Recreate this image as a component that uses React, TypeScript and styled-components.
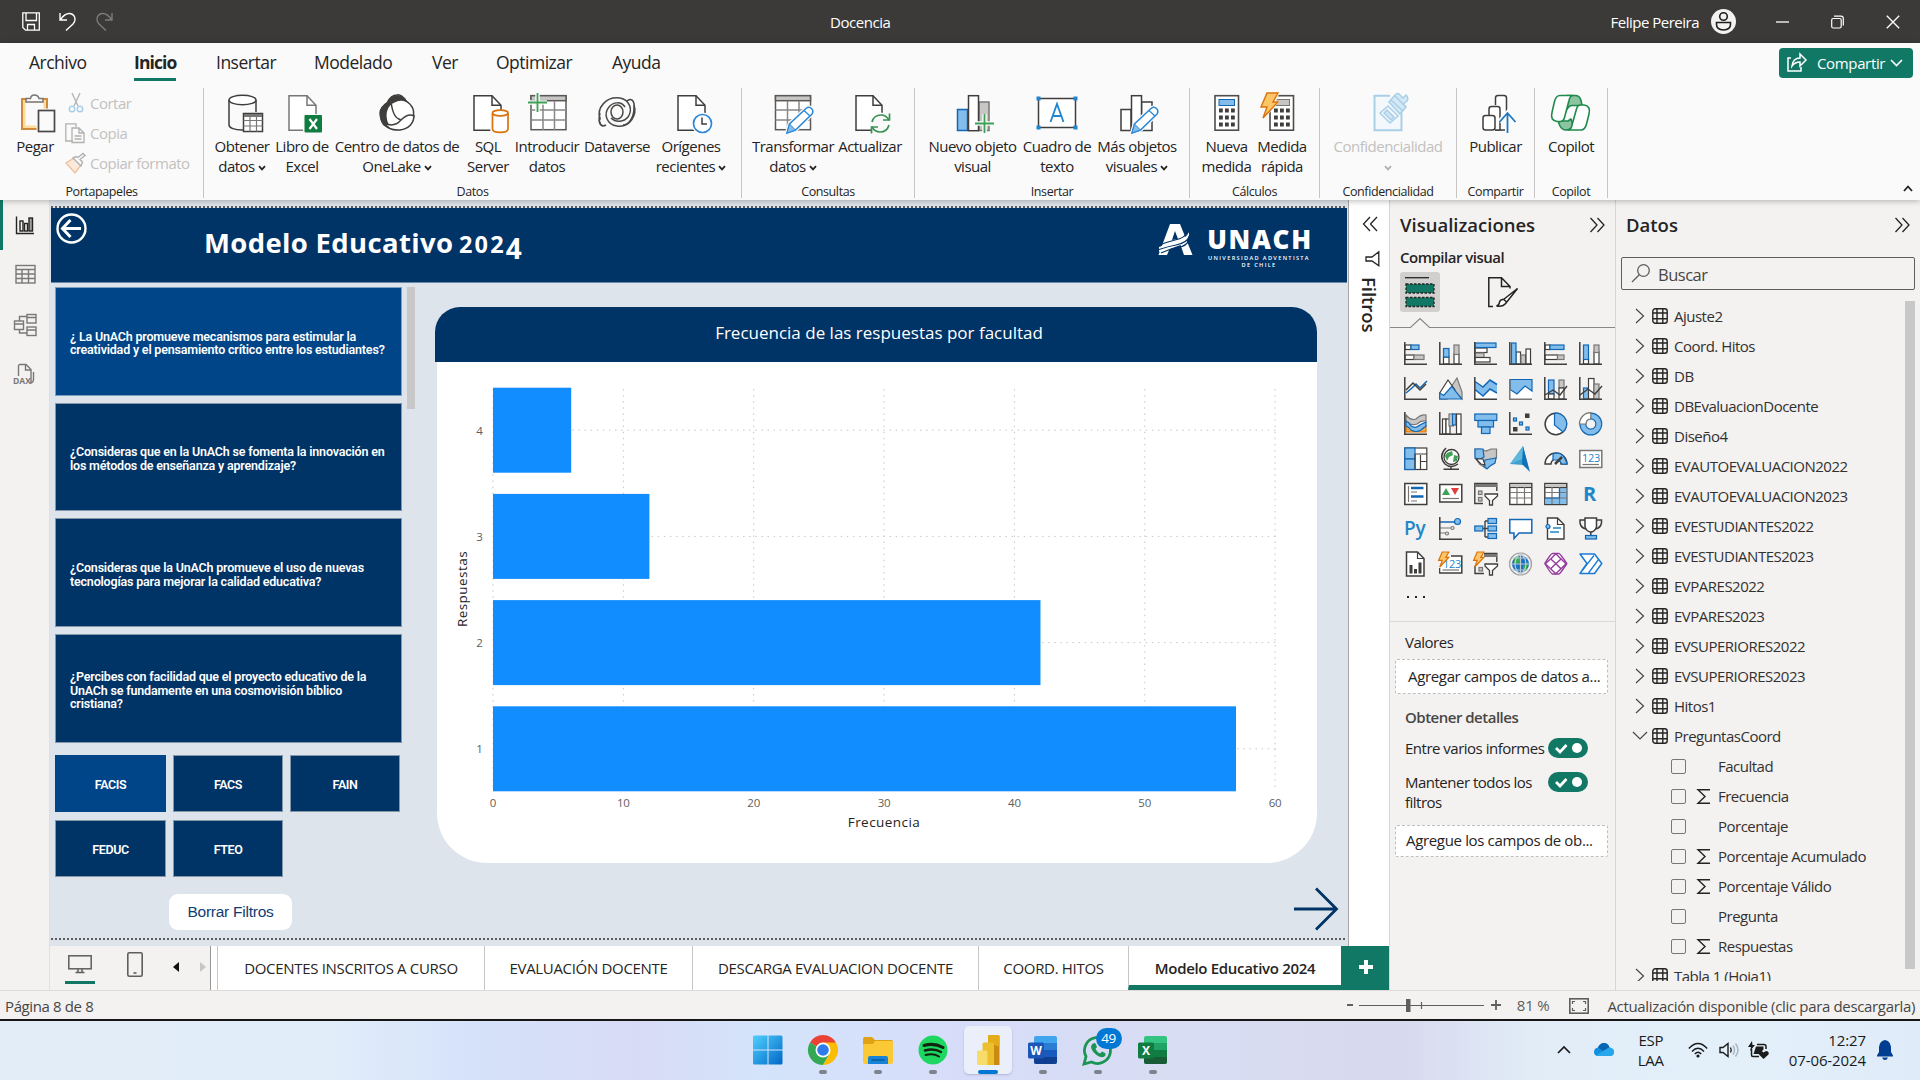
import React from 'react';
import styled, { createGlobalStyle, css } from 'styled-components';

const UI = '"Open Sans", "Noto Sans", sans-serif';
const K = '#3f3e3c';
const DK = '#252423';
const BLUE = '#83bdeb';
const BS = '#1267b4';
const GRAY = '#c8c6c4';
const GS = '#797775';
const WHITE = '#fafafa';
const GREEN = '#117865';
const NAVY = '#003366';

const Global = createGlobalStyle`
  * { box-sizing: border-box; }
  body { margin: 0; overflow: hidden; background: #f3f2f1; }
  svg { display: block; flex: none; overflow: visible; }
`;

const Glyph = styled.svg<{ $mt?: number; $ml?: number; $mr?: number }>`
  fill: none;
  margin: ${p => p.$mt ?? 0}px ${p => p.$mr ?? 0}px 0 ${p => p.$ml ?? 0}px;
`;

const Screen = styled.div`
  width: 1920px;
  height: 1080px;
  display: flex;
  flex-direction: column;
  overflow: hidden;
  font-family: ${UI};
  font-size: 15px;
  letter-spacing: -0.5px;
  color: ${DK};
  white-space: nowrap;
`;

/* ---------- title bar ---------- */
const TitleBar = styled.header`
  height: 43px;
  flex: none;
  background: #3b3a38;
  color: #fff;
  display: grid;
  grid-template-columns: 830px auto 1fr;
  align-items: center;
`;
const QuickAccess = styled.div`
  display: flex;
  align-items: center;
  gap: 19px;
  padding-left: 22px;
`;
const DocTitle = styled.div`
  font-size: 15px;
  letter-spacing: -0.45px;
`;
const WindowTools = styled.div`
  display: flex;
  align-items: center;
  justify-content: flex-end;
  padding-right: 20px;
`;
const UserName = styled.span`
  font-size: 15px;
  letter-spacing: -0.5px;
  margin-right: 12px;
`;
const Avatar = styled.span`
  margin-right: 40px;
`;
const WindowButtons = styled.div`
  display: flex;
  align-items: center;
  gap: 42px;
`;

/* ---------- ribbon ---------- */
const Ribbon = styled.section`
  height: 157px;
  flex: none;
  background: ${WHITE};
  position: relative;
  z-index: 2;
  box-shadow: 0 1px 6px rgba(0, 0, 0, 0.28);
  display: flex;
  flex-direction: column;
`;
const MenuRow = styled.nav`
  display: flex;
  align-items: center;
  height: 40px;
  padding: 0 7px 0 29px;
`;
const MenuItem = styled.div<{ $w: number; $active?: boolean }>`
  width: ${p => p.$w}px;
  height: 40px;
  font-size: 17.5px;
  line-height: 38px;
  font-weight: ${p => (p.$active ? 700 : 400)};
  span {
    display: inline-block;
    height: 38px;
    ${p => p.$active && css`border-bottom: 3px solid ${GREEN}; letter-spacing: -0.9px;`}
  }
`;
const ShareButton = styled.div`
  margin-left: auto;
  width: 134px;
  height: 30px;
  border-radius: 4px;
  background: ${GREEN};
  color: #fff;
  display: flex;
  align-items: center;
  padding: 0 0 1px 8px;
  gap: 10px;
  font-size: 15px;
  letter-spacing: -0.35px;
  svg:last-child { margin-left: -5px; }
`;
const Groups = styled.div`
  display: flex;
  height: 110px;
  margin-top: 5px;
`;
const Group = styled.div<{ $w: number; $pad?: number }>`
  width: ${p => p.$w}px;
  height: 110px;
  border-right: 1px solid #c8c6c4;
  padding-left: ${p => p.$pad ?? 0}px;
  display: flex;
  flex-direction: column;
`;
const GroupButtons = styled.div`
  display: flex;
  flex: none;
  height: 95px;
`;
const GroupName = styled.div<{ $pull?: number }>`
  text-align: center;
  font-size: 12.5px;
  line-height: 18px;
  letter-spacing: -0.4px;
  margin-left: -${p => p.$pull ?? 0}px;
`;
const ToolButton = styled.div<{ $w: number; $off?: boolean }>`
  width: ${p => p.$w}px;
  display: flex;
  flex-direction: column;
  align-items: center;
  padding-top: 5px;
  color: ${p => (p.$off ? '#c3c1bf' : DK)};
`;
const BigIcon = styled.svg`
  fill: none;
  margin-bottom: 3px;
`;
const ToolLabel = styled.div`
  line-height: 20px;
  display: flex;
  align-items: center;
  justify-content: center;
  gap: 3px;
  min-height: 20px;
`;
const ClipList = styled.div`
  display: flex;
  flex-direction: column;
  padding-left: 9px;
`;
const ClipItem = styled.div`
  display: flex;
  align-items: center;
  height: 30px;
  gap: 5px;
  padding-bottom: 1px;
  color: #c3c1bf;
`;
const Collapse = styled.div`
  margin-left: auto;
  align-self: flex-end;
  padding: 0 7px 6px 0;
`;

/* ---------- workspace ---------- */
const Work = styled.main`
  flex: none;
  height: 790px;
  display: flex;
`;
const Rail = styled.aside`
  width: 50px;
  background: #f3f2f1;
  border-right: 1px solid #e1dfdd;
`;
const RailItem = styled.div<{ $active?: boolean }>`
  height: 50px;
  display: flex;
  align-items: center;
  padding-left: ${p => (p.$active ? 10 : 13)}px;
  border-left: ${p => (p.$active ? `3px solid ${GREEN}` : '0')};
`;
const Center = styled.section`
  width: 1340px;
  display: flex;
  flex-direction: column;
  border-right: 1px solid #d8d6d4;
`;
const CanvasRow = styled.div`
  display: flex;
  height: 746px;
`;
const Canvas = styled.div`
  width: 1299px;
  background: #dee4eb;
  border-right: 1px solid #a8a6a4;
  padding: 6px 1px 0;
`;
const DotRule = styled.div`
  height: 2px;
  background: repeating-linear-gradient(90deg, #5c5c5c 0 2px, transparent 2px 4px);
`;
const PageHeader = styled.div`
  height: 75px;
  background: ${NAVY};
  border-bottom: 1px solid #6b88a8;
  display: flex;
  padding-left: 5px;
`;
const BackButton = styled.div`
  padding-top: 5px;
  width: 148px;
`;
const PageTitle = styled.h1`
  margin: 0;
  padding-top: 17px;
  font-size: 27.5px;
  line-height: 36px;
  font-weight: 700;
  letter-spacing: 0.35px;
  color: #fff;
`;
const OldStyle = styled.span`
  font-size: 23.5px;
  letter-spacing: 2.2px;
  margin-left: -2px;
`;
const OldStyleDrop = styled.span`
  position: relative;
  top: 6px;
  font-size: 28px;
  line-height: 20px;
`;
const Logo = styled.div`
  margin-left: auto;
  padding: 15px 35px 0 0;
  display: flex;
  gap: 13px;
  color: #fff;
`;
const LogoText = styled.div`
  width: 106px;
  display: flex;
  flex-direction: column;
  align-items: center;
`;
const LogoName = styled.div`
  font-size: 26px;
  line-height: 26px;
  font-weight: 800;
  letter-spacing: 1.7px;
  margin: 3px -2px 3px 0;
`;
const LogoSub = styled.div`
  font-size: 5.6px;
  line-height: 6.5px;
  font-weight: 600;
  letter-spacing: 1.35px;
`;
const PageBody = styled.div`
  display: flex;
  height: 655px;
`;
const Slicers = styled.div`
  width: 384px;
  padding: 4px 0 0 4px;
`;
const QuestionRow = styled.div`
  display: flex;
  gap: 5px;
`;
const Questions = styled.div`
  display: flex;
  flex-direction: column;
  gap: 7px;
`;
const din = css`
  font-family: Roboto, "Open Sans", sans-serif;
  font-size: 12.5px;
  font-weight: 600;
  letter-spacing: -0.19px;
  color: #fff;
`;
const Question = styled.div<{ $on?: boolean }>`
  ${din}
  width: 347px;
  height: 108.7px;
  padding: 4px 0 0 14px;
  display: flex;
  align-items: center;
  white-space: pre-line;
  line-height: 13.6px;
  background: ${p => (p.$on ? '#004588' : NAVY)};
  border: 1px solid ${p => (p.$on ? '#7f9fc2' : '#8496a8')};
`;
const SlicerThumb = styled.div`
  width: 8px;
  height: 122px;
  background: #c8c8c8;
`;
const Faculties = styled.div`
  display: grid;
  grid-template-columns: 111px 110px 110px;
  grid-auto-rows: 57px;
  gap: 8px 7px;
  margin-top: 12px;
`;
const Faculty = styled.div<{ $on?: boolean }>`
  ${din}
  letter-spacing: -0.4px;
  padding-top: 2px;
  display: flex;
  align-items: center;
  justify-content: center;
  background: ${p => (p.$on ? '#004588' : NAVY)};
  border: 1px solid ${p => (p.$on ? '#004588' : '#8496a8')};
`;
const ClearButton = styled.div`
  width: 123px;
  height: 36px;
  margin: 17px 0 0 114px;
  border-radius: 9px;
  background: #fff;
  color: #123c70;
  font: 15.5px/36px "Liberation Sans", Arial, sans-serif;
  letter-spacing: -0.25px;
  text-align: center;
`;
const ChartColumn = styled.div`
  width: 882px;
  padding-top: 24px;
`;
const ChartTitle = styled.div`
  height: 55px;
  border-radius: 25px 25px 0 0;
  background: ${NAVY};
  color: #fff;
  font-size: 17px;
  line-height: 51px;
  letter-spacing: 0;
  text-align: center;
  padding-left: 6px;
`;
const ChartCard = styled.div`
  margin-left: 2px;
  height: 501px;
  background: #fff;
  border-radius: 0 0 50px 50px;
`;
const NextArrow = styled.div`
  align-self: flex-end;
  margin: 0 0 7px -23px;
`;
const FiltersPane = styled.div`
  width: 40px;
  background: #fff;
  display: flex;
  flex-direction: column;
  align-items: center;
  padding: 16px 0 0 1px;
`;
const FiltersLabel = styled.div`
  writing-mode: vertical-rl;
  font-size: 18.5px;
  font-weight: 600;
  letter-spacing: -0.05px;
  line-height: 20px;
  margin: 10px 1px 0 0;
`;

/* ---------- page tabs ---------- */
const TabStrip = styled.div`
  height: 44px;
  display: flex;
  background: #fff;
`;
const ViewModes = styled.div`
  width: 161px;
  background: #f3f2f1;
  border-right: 1px solid #979593;
  display: flex;
  padding: 6px 0 0 14px;
`;
const ModeButton = styled.div<{ $active?: boolean }>`
  width: 30px;
  height: 32px;
  margin-left: 1px;
  margin-right: ${p => (p.$active ? 24 : 23)}px;
  display: flex;
  justify-content: center;
  border-bottom: ${p => (p.$active ? `3px solid ${GREEN}` : '0')};
`;
const Nudge = styled.div`
  display: flex;
  gap: 21px;
  padding-top: 10px;
`;
const PageTab = styled.div<{ $w: number; $active?: boolean }>`
  width: ${p => p.$w}px;
  border-left: 1px solid #c8c6c4;
  border-bottom: ${p => (p.$active ? `5px solid ${GREEN}` : '0')};
  text-align: center;
  line-height: 45px;
  font-weight: ${p => (p.$active ? 600 : 400)};
  letter-spacing: -0.32px;
`;
const TabGap = styled.div`
  width: 6px;
`;
const AddPage = styled.div`
  flex: 1;
  background: ${GREEN};
  display: flex;
  align-items: center;
  justify-content: center;
  padding: 0 0 3px 1px;
`;

/* ---------- visualizations ---------- */
const VisPane = styled.section`
  width: 226px;
  border-right: 1px solid #d8d6d4;
  background: #f3f2f1;
  display: flex;
  flex-direction: column;
`;
const PaneHead = styled.div`
  height: 48px;
  display: flex;
  align-items: center;
  justify-content: space-between;
  padding: 1px 10px 0 10px;
  font-size: 18.5px;
  font-weight: 600;
  letter-spacing: 0;
`;
const BuildLabel = styled.div`
  padding: 0 0 2px 10px;
  font-weight: 600;
  line-height: 18px;
  font-size: 15px;
`;
const BuildTabs = styled.div`
  display: flex;
  padding: 4px 0 0 10px;
`;
const BuildTab = styled.div<{ $on?: boolean }>`
  width: 40px;
  height: 40px;
  margin-right: ${p => (p.$on ? 43 : 0)}px;
  border-radius: 3px;
  background: ${p => (p.$on ? '#d2d0ce' : 'transparent')};
  display: flex;
  align-items: center;
  justify-content: center;
`;
const VisGrid = styled.div`
  display: grid;
  grid-template-columns: repeat(6, 35px);
  grid-auto-rows: 35px;
  padding: 14px 0 0 13.5px;
`;
const More = styled.div`
  display: flex;
  gap: 6px;
  padding: 9px 0 0 17px;
  height: 34px;
`;
const Dot = styled.span`
  width: 2px;
  height: 2px;
  background: ${DK};
`;
const FieldWells = styled.div`
  border-top: 1px solid #dcdad8;
  padding-top: 9px;
`;
const WellTitle = styled.div<{ $bold?: boolean }>`
  line-height: 22px;
  padding-left: 15px;
  margin-top: ${p => (p.$bold ? 12 : 0)}px;
  font-weight: ${p => (p.$bold ? 600 : 400)};
  color: ${p => (p.$bold ? '#484644' : DK)};
`;
const Well = styled.div<{ $h: number; $x: number; $mt: number }>`
  margin: ${p => p.$mt}px 0 0 5px;
  width: 213px;
  height: ${p => p.$h}px;
  line-height: ${p => p.$h - 3}px;
  padding-left: ${p => p.$x}px;
  background: #fff;
  border: 1px dashed #c0bebc;
  border-radius: 2px;
  letter-spacing: -0.34px;
`;
const ToggleRow = styled.div<{ $mt: number }>`
  display: flex;
  justify-content: space-between;
  margin-top: ${p => p.$mt}px;
  padding: 0 27px 0 15px;
  line-height: 20px;
`;
const Toggle = styled.div`
  width: 40px;
  height: 20px;
  border-radius: 10px;
  background: ${GREEN};
`;

/* ---------- data pane ---------- */
const DataPane = styled.section`
  flex: 1;
  background: #f3f2f1;
  display: flex;
  flex-direction: column;
`;
const SearchBox = styled.div`
  margin: 9px 5px 0;
  height: 33px;
  border: 1px solid #605e5c;
  border-radius: 2px;
  display: flex;
  align-items: center;
  gap: 8px;
  padding: 1px 0 0 9px;
  font-size: 16.5px;
  color: #484644;
`;
const TreeRow = styled.div`
  display: flex;
  height: 680px;
  margin-top: 11px;
  overflow: hidden;
`;
const Tree = styled.div`
  flex: 1;
`;
const TableRow = styled.div`
  height: 30px;
  display: flex;
  align-items: center;
  color: #323130;
`;
const FieldRow = styled.div`
  height: 30px;
  display: flex;
  align-items: center;
  padding-left: 55px;
  color: #323130;
`;
const Check = styled.span`
  width: 15px;
  height: 15px;
  border: 1px solid #797775;
  border-radius: 2px;
  margin-right: 11px;
`;
const Agg = styled.span`
  width: 21px;
`;
const TreeThumb = styled.div`
  width: 10px;
  height: 668px;
  margin-right: 5px;
  background: #c8c8c8;
`;

/* ---------- status bar ---------- */
const StatusBar = styled.footer`
  height: 31px;
  flex: none;
  background: #f3f2f1;
  border-top: 1px solid #dddbd9;
  border-bottom: 2px solid #161616;
  display: flex;
  align-items: center;
  padding: 2px 5px 0 5px;
  color: #484644;
`;
const PageCount = styled.span`
  letter-spacing: -0.38px;
`;
const Zoom = styled.div`
  margin-left: auto;
  display: flex;
  align-items: center;
`;
const ZoomPct = styled.span`
  margin: -2px 20px 0 16px;
  color: #605e5c;
  letter-spacing: -0.2px;
`;
const Update = styled.span`
  margin-left: 18px;
  letter-spacing: -0.34px;
`;

/* ---------- taskbar ---------- */
const Taskbar = styled.div`
  flex: 1;
  display: grid;
  grid-template-columns: 1fr auto 1fr;
  background: linear-gradient(90deg, #e2edf7 0, #e1edf9 330px, #d6e2fa 470px, #d8dbf6 640px, #d4e4fb 760px, #d7dcf8 980px, #d8ddf3 1200px, #d7d9ee 1400px, #e1ecf7 1530px, #e3f0fa 1750px, #dfebf8 1920px);
`;
const Apps = styled.div`
  grid-column: 2;
  display: flex;
  padding-top: 5px;
  gap: 7px;
`;
const AppTile = styled.div<{ $active?: boolean }>`
  width: 48px;
  height: 48px;
  border-radius: 5px;
  display: flex;
  flex-direction: column;
  align-items: center;
  justify-content: space-between;
  padding-top: 9px;
  position: relative;
  background: ${p => (p.$active ? '#ebeffa' : 'transparent')};
  box-shadow: ${p => (p.$active ? '0 1px 2px rgba(60, 70, 110, 0.25)' : 'none')};
`;
const RunDot = styled.div<{ $active?: boolean; $none?: boolean }>`
  width: ${p => (p.$active ? 20 : 8)}px;
  height: 4px;
  border-radius: 2px;
  visibility: ${p => (p.$none ? 'hidden' : 'visible')};
  background: ${p => (p.$active ? '#0078d4' : '#7d828e')};
`;
const Badge = styled.div`
  position: absolute;
  left: 22px;
  top: 2px;
  width: 26px;
  height: 21px;
  border-radius: 11px;
  background: #0078d4;
  color: #fff;
  font-size: 13.5px;
  line-height: 20px;
  text-align: center;
`;
const TileLetter = styled.text`
  font-family: ${UI};
  font-size: 12px;
  font-weight: 700;
  letter-spacing: 0;
  text-anchor: middle;
  fill: #fff;
`;
const Tray = styled.div`
  grid-column: 3;
  display: flex;
  align-items: center;
  justify-content: flex-end;
  padding: 0 27px 2px 0;
  color: #1b1b1b;
`;
const Lang = styled.div`
  margin: 0 24px 0 24px;
  text-align: center;
  line-height: 20px;
  letter-spacing: -0.3px;
`;
const Clock = styled.div`
  text-align: right;
  line-height: 20px;
  margin: 0 11px 0 19px;
  letter-spacing: -0.1px;
`;

/* ---------- small icons ---------- */
const Caret = ({ c = DK }: { c?: string }) => (
  <Glyph width="8" height="6" $mt={3}><path d="M1 1.200 4 4.400 7 1.200" stroke={c} strokeWidth="1.800" /></Glyph>
);
const DoubleChevron = ({ left, s = 15 }: { left?: boolean; s?: number }) => (
  <svg width={s} height="16" viewBox="0 0 15 16" fill="none" stroke={DK} strokeWidth="1.300">
    {left ? <path d="M7.500 1 1 8l6.500 7M14.500 1 8 8l6.500 7" /> : <path d="M.5 1 7 8 .5 15M7.500 1 14 8l-6.500 7" />}
  </svg>
);
const Page = ({ x, c = K, w = 27 }: { x: number; c?: string; w?: number }) => (
  <g fill="#fff" stroke={c} strokeWidth="1.500">
    <path d={`M${x} 2.700h${w - 9}l9 9.500v25h-${w}z`} />
    <path d={`M${x + w - 9} 2.700v9.500h9`} fill="none" />
  </g>
);
const Pencil = ({ x = 16, y = 14 }: { x?: number; y?: number }) => (
  <g transform={`translate(${x} ${y})`}>
    <path d="M0 26 2.500 17 19 1.500Q22-1 24.500 1.500T25 7L8.500 23z" fill="#fff" stroke="#fafafa" strokeWidth="4" />
    <path d="M0 26 2.500 17 19 1.500Q22-1 24.500 1.500T25 7L8.500 23z" fill="#fff" stroke="#2b88d8" strokeWidth="1.500" />
    <path d="M0 26 2.500 17 8.500 23z" fill="#83bdeb" stroke="#2b88d8" />
    <path d="m17 3.500 6 5.500" stroke="#2b88d8" strokeWidth="1.300" />
  </g>
);
const Plus = ({ x, y }: { x: number; y: number }) => (
  <g><path d={`M${x - 9.5} ${y}h19M${x} ${y - 9.5}v19`} stroke="#fafafa" strokeWidth="4.500" /><path d={`M${x - 9.5} ${y}h19M${x} ${y - 9.5}v19`} stroke="#3fa058" strokeWidth="1.800" /></g>
);
const GridTable = ({ x, c = '#5b5957' }: { x: number; c?: string }) => (
  <g fill="none" stroke={c} strokeWidth="1.500">
    <rect x={x} y="2.700" width="35" height="34" fill="#fff" />
    <rect x={x} y="2.700" width="35" height="5" fill={GRAY} />
    <path d={`M${x} 17h35M${x} 27h35M${x + 12} 8v29M${x + 23.5} 8v29`} stroke="#8a8886" />
  </g>
);
const Calc = ({ x, top }: { x: number; top: string }) => (
  <g>
    <rect x={x} y="2.700" width="23.500" height="34.500" fill="#fff" stroke="#4f4d4b" strokeWidth="1.600" />
    <rect x={x + 4} y="6.500" width="15.500" height="6" fill={top} stroke={top === GRAY ? GS : BS} />
    {[15.5, 22.5, 29.5].map(y => [4, 10, 16].map(d => <rect key={`${y}${d}`} x={x + d} y={y} width="3.800" height="4" fill={K} />))}
  </g>
);
const Bolt = ({ s = 1 }: { s?: number }) => (
  <path transform={`scale(${s})`} d="M7 0h11l-5 9h5L3 25l4-11H1z" fill="#fcc566" stroke="#d9730d" strokeWidth={s < 1 ? 2 : 1.4} />
);
const Big = ({ children }: { children: React.ReactNode }) => (
  <BigIcon width="44" height="40">{children}</BigIcon>
);

const big: Record<string, React.ReactNode> = {
  paste: <Big><g strokeWidth="2"><rect x="9" y="6" width="25" height="30" fill="#fbdc9a" stroke="#d08a3c" strokeWidth="2" /><rect x="12.500" y="9.500" width="18" height="23" fill="#fafafa" stroke="none" /><path d="M13 9V5.500h4.500Q18 2 21.500 2T26 5.500h4V9z" fill="#fafafa" stroke="#797775" strokeWidth="1.500" /><rect x="23.500" y="15.500" width="19" height="24" fill={WHITE} stroke="none" /><rect x="25.500" y="17.500" width="16" height="21" fill="#fafafa" stroke="#4a4846" strokeWidth="1.700" /></g></Big>,
  db: <Big><path d="M9 7v25c0 3 6 5 13 5h1M36 7v12" stroke={K} strokeWidth="1.500" /><ellipse cx="22.500" cy="7" rx="13.500" ry="4.800" fill="#fff" stroke={K} strokeWidth="1.500" /><rect x="23.500" y="20.500" width="19" height="18" fill="#fff" stroke={K} strokeWidth="1.500" /><path d="M24 22.500h18" stroke={GS} strokeWidth="3" /><path d="M23.500 27.500h19M23.500 33h19M30 24v14.500M36.500 24v14.500" stroke={GS} strokeWidth="1.200" /></Big>,
  excel: <Big><Page x={9} c="#797775" /><rect x="23" y="21" width="20" height="20" fill={WHITE} /><rect x="24.500" y="22" width="17.500" height="17.500" rx="1" fill="#107c41" /><path d="m29.500 26 7.500 10M37 26l-7.500 10" stroke="#fff" strokeWidth="2.200" /></Big>,
  lake: <Big><g strokeWidth="1.500" stroke={K}><path d="M13 9C17 2 26 1 31 8q10 9 7 20" fill="#fff" /><path d="M12 10C4 15 4 26 9 32q8 6 16 4l12-9c4-10 0-15-6-19Q26 1 22 2q-6 0-10 8z" fill="#fff" /><path d="M12.500 10C16 2 27 0 31 8q-5-2-10 0-6 2-8.500 7-4 8 1 18-8-3-8.500-13 .5-6 7.500-10z" fill={K} /><path d="M16 8.500q2 17 9.500 18M9 30q10 5 17-3 7-7 13-4-1 12-14 14-11 1-16-7z" fill="#fff" /></g></Big>,
  sql: <Big><Page x={8} /><path d="M26.500 20v16c0 4.500 15.500 4.500 15.500 0V20" fill="#fff" stroke={WHITE} strokeWidth="5" /><path d="M26.500 20v16c0 4.500 15.500 4.500 15.500 0V20" fill="#fff" stroke="#d9730d" strokeWidth="1.700" /><ellipse cx="34.250" cy="20" rx="7.750" ry="2.800" fill="#fff" stroke="#d9730d" strokeWidth="1.700" /></Big>,
  enter: <Big><GridTable x={6} /><Plus x={12.5} y={9.5} /></Big>,
  dataverse: <Big><g stroke="#4a4846" strokeWidth="1.500"><path d="M5 27C1 14 12 3 25 5c10 2 13 12 8 19-4 5-12 6-17 1M8 33C3 31 4 24 5 20M39 12c3 9-3 23-17 21-10-1-14-12-8-19 4-5 12-6 16 0" /><path d="M32 8c4-4 8 0 7 7 0 9-5 17-11 17M5 24c-2 6 1 11 6 8" /><ellipse cx="22" cy="19" rx="6" ry="7" /></g></Big>,
  recent: <Big><Page x={9} /><circle cx="33.500" cy="30.500" r="11" fill={WHITE} /><circle cx="33.500" cy="30.500" r="9" fill="#fff" stroke="#2b88d8" strokeWidth="1.700" /><path d="M33 24.500v6.500h5" stroke={K} strokeWidth="1.500" /></Big>,
  transform: <Big><GridTable x={4.500} /><Pencil /></Big>,
  refresh: <Big><Page x={8} w={26} /><circle cx="32.500" cy="30.500" r="11" fill={WHITE} /><g stroke="#3a9150" strokeWidth="1.700"><path d="M24 29q2-7 9-7 5 0 8 5M41 32q-2 7-9 7-5 0-8-5" /><path d="M41.500 20.500V27H35M23.500 40.500V34H30" /></g></Big>,
  newVisual: <Big><g strokeWidth="1.500"><rect x="28" y="9" width="10" height="28.500" fill={GRAY} stroke={GS} /><rect x="6.500" y="16.500" width="10" height="21" fill={BLUE} stroke={BS} /><rect x="17.500" y="2.700" width="10" height="35" fill="#fff" stroke={K} /></g><Plus x={33.5} y={30.5} /></Big>,
  textbox: <Big><rect x="3.500" y="5.500" width="37" height="29" fill="#fff" stroke={K} strokeWidth="1.500" />{[[3.5, 5.5], [40.5, 5.5], [3.5, 34.5], [40.5, 34.5]].map(([a, b]) => <rect key={`${a}${b}`} x={a - 2} y={b - 2} width="4" height="4" fill="#1f85d0" />)}<path d="m15.500 29 6.500-18 6.500 18M18 23h8" stroke="#1f85d0" strokeWidth="1.800" /></Big>,
  moreVisuals: <Big><g fill="#fff" stroke={K} strokeWidth="1.500"><rect x="6" y="16.500" width="10" height="21" /><rect x="26.500" y="9" width="10.500" height="28.500" /><rect x="16.500" y="2.700" width="10" height="35" /></g><Pencil x={17} /></Big>,
  calc: <Big><Calc x={10} top={BLUE} /></Big>,
  quick: <Big><Calc x={10} top={GRAY} /><path d="M6-1h14l-4 9h4L2 28V14h-3z" fill={WHITE} /><Bolt /></Big>,
  secret: <Big><g stroke="#a9cfe8" strokeWidth="1.500" fill="#f2f8fc"><path d="M24 2.700H8.500v34.500h27V20" strokeWidth="2" /><path d="m14 20 8-7 10 10-8 7z" /><path d="m18 20 3-3 7 7-3 3z" fill="#cfe5f3" /><path d="m23 9 6-7q3-3 5 0l3 3 3-3q3 3 1 6l-4 3 3 3-6 7z" fill="#d5e8f5" /><path d="m25 7 12 11M29 3l11 11" /></g></Big>,
  publish: <Big><g stroke={K} strokeWidth="1.500" fill="#fff"><path d="M21.500 12V5q0-2.500 2.500-2.500h6q2.500 0 2.500 2.500v20M33 37H21" /><path d="M15 22v-6q0-2.500 2.500-2.500h6q2.500 0 2.500 2.500v21H21" /><rect x="9" y="22.500" width="12" height="14.500" rx="2.500" /></g><path d="M33.500 39V21M25.500 29l8-9 8 9" stroke={WHITE} strokeWidth="5" /><path d="M33.500 40V21M25.500 29l8-9 8 9" stroke="#1f78c0" strokeWidth="1.800" /></Big>,
  copilot: <Big><g stroke="#1f8a4c" strokeWidth="1.600" strokeLinejoin="round" fill="#fff"><path d="M9 28h10l3-2 2 6q-1 5-7 5-4 0-6-4z" fill="#8cc3a0" /><path d="M18 2.500h8q5 0 6 5l1 5H23q-3 0-5 4z" fill="#8cc3a0" /><path d="M11 2.500h13q-3 0-4 5l-4.500 17Q14.500 28.500 11 28.500H8q-7-1-5-9L5.500 8.500q1.500-6 5.500-6zM32 37H19q3 0 4-5l4.500-16Q28.500 12 32 12h3q7 1 5 9l-2.500 10q-1.500 6-5.500 6z" /></g></Big>,
};

type Tool = { i: string; w: number; l: string[]; caret?: number; off?: boolean };
type Grp = { name: string; w: number; pad: number; tools: Tool[] };
const groups: Grp[] = [
  { name: 'Datos', w: 538, pad: 7, tools: [
    { i: 'db', w: 62, l: ['Obtener', 'datos'], caret: 1 }, { i: 'excel', w: 58, l: ['Libro de', 'Excel'] }, { i: 'lake', w: 132, l: ['Centro de datos de', 'OneLake'], caret: 1 },
    { i: 'sql', w: 50, l: ['SQL', 'Server'] }, { i: 'enter', w: 68, l: ['Introducir', 'datos'] }, { i: 'dataverse', w: 72, l: ['Dataverse'] }, { i: 'recent', w: 76, l: ['Orígenes', 'recientes'], caret: 1 }] },
  { name: 'Consultas', w: 173, pad: 10, tools: [{ i: 'transform', w: 82, l: ['Transformar', 'datos'], caret: 1 }, { i: 'refresh', w: 72, l: ['Actualizar'] }] },
  { name: 'Insertar', w: 275, pad: 10, tools: [{ i: 'newVisual', w: 95, l: ['Nuevo objeto', 'visual'] }, { i: 'textbox', w: 74, l: ['Cuadro de', 'texto'] }, { i: 'moreVisuals', w: 86, l: ['Más objetos', 'visuales'], caret: 1 }] },
  { name: 'Cálculos', w: 130, pad: 9, tools: [{ i: 'calc', w: 55, l: ['Nueva', 'medida'] }, { i: 'quick', w: 56, l: ['Medida', 'rápida'] }] },
  { name: 'Confidencialidad', w: 137, pad: 0, tools: [{ i: 'secret', w: 136, l: ['Confidencialidad', ''], caret: 1, off: true }] },
  { name: 'Compartir', w: 78, pad: 0, tools: [{ i: 'publish', w: 77, l: ['Publicar'] }] },
  { name: 'Copilot', w: 73, pad: 0, tools: [{ i: 'copilot', w: 72, l: ['Copilot'] }] },
];

const ToolView = ({ t }: { t: Tool }) => (
  <ToolButton $w={t.w} $off={t.off}>
    {big[t.i]}
    {t.l.map((x, n) => <ToolLabel key={n}>{x}{t.caret === n && <Caret c={t.off ? '#b3b0ad' : DK} />}</ToolLabel>)}
  </ToolButton>
);

/* ---------- visual gallery ---------- */
const V = ({ children }: { children: React.ReactNode }) => (
  <svg width="24" height="24" viewBox="0 0 24 24" fill="none" strokeWidth="1.200">{children}</svg>
);
const Ax = () => <path d="M.8 0v22.300H23" stroke={K} strokeWidth="1.500" />;
const tone: Record<string, [string, string]> = { w: ['#fff', K], b: [BLUE, BS], g: [GRAY, GS] };
const R = ({ t, a }: { t: string; a: number[] }) => <rect x={a[0]} y={a[1]} width={a[2]} height={a[3]} fill={tone[t][0]} stroke={tone[t][1]} />;
const P = ({ t, d }: { t: string; d: string }) => <path d={d} fill={tone[t][0]} stroke={tone[t][1]} />;
const GridLines = () => <path d="M1 10.500h21.500M1 16h21.500M8 5v17M15.500 5v17" stroke={GS} />;
const Funnel = () => <path d="M11 12h12.500v2l-5 4.500v4.500h-3v-4.500L11 14z" fill="#fff" stroke={K} strokeWidth="1.300" />;
const VisText = styled.text<{ $s: number; $w?: number }>`
  font-family: ${UI};
  font-size: ${p => p.$s}px;
  font-weight: ${p => p.$w ?? 400};
  fill: #1f86c8;
  letter-spacing: -0.3px;
`;

const visuals: React.ReactNode[] = [
  <V><R t="w" a={[1, 3, 6, 4.5]} /><R t="b" a={[7, 3, 8, 4.5]} /><R t="w" a={[1, 13, 9, 4.5]} /><R t="g" a={[10, 13, 10, 4.5]} /><Ax /></V>,
  <V><R t="w" a={[4.5, 15, 5.5, 7]} /><R t="b" a={[4.5, 6.5, 5.5, 8.5]} /><R t="w" a={[15, 12, 5, 10]} /><R t="g" a={[15, 3, 5, 9.5]} /><Ax /></V>,
  <V><R t="w" a={[1, 6, 12, 4.5]} /><R t="g" a={[1, 11, 9, 4.5]} /><R t="w" a={[1, 15.5, 15, 4.5]} /><R t="b" a={[1, 1, 21, 4.5]} /><Ax /></V>,
  <V><R t="w" a={[7, 10, 4.5, 12]} /><R t="g" a={[12, 13, 4.5, 9]} /><R t="w" a={[17, 7, 4.5, 15]} /><R t="b" a={[2.5, 1, 4.5, 21]} /><Ax /></V>,
  <V><R t="w" a={[1, 3, 5, 4.5]} /><R t="b" a={[6, 3, 14, 4.5]} /><R t="w" a={[1, 13, 12.5, 4.5]} /><R t="g" a={[13.5, 13, 6.5, 4.5]} /><Ax /></V>,
  <V><R t="w" a={[4.5, 17, 5, 5]} /><R t="b" a={[4.5, 3, 5, 14.5]} /><R t="w" a={[15, 10, 5, 12]} /><R t="g" a={[15, 3, 5, 7.5]} /><Ax /></V>,

  <V><path d="m2 16 6-5 4-4 4 4 7-7" stroke={BS} strokeWidth="1.500" /><path d="m2 13 7-7 7 7 6-6" stroke={K} strokeWidth="1.500" /><Ax /></V>,
  <V><P t="g" d="M12 10 18 1l5 14v7z" /><P t="w" d="M.7 16 9 3l7 10-8 9H.7z" /><P t="b" d="M.7 16l4 2.500 8-9 10 12.500H.7z" /></V>,
  <V><path d="M1 13l8 5 6-6 8 3v6.500H1z" fill="#fff" /><path d="M1 5l5 4 3 1 7-7 7 4v8l-7-3-7 7-8-6z" fill={BLUE} /><path d="M1 4.500 9 10l7-7 7 4.500M1 12.500l8 6.500 7-7 7 4" stroke={BS} strokeWidth="1.500" /><Ax /></V>,
  <V><path d="M1 2.500h22v9.500l-7-6.500-8 12-7-5z" fill={BLUE} /><path d="M1 12.500 8 17l8-8 7 5v8H1z" fill="#fff" /><path d="M1 2.500h22V14l-7-5-8 8-7-4.500z" fill={BLUE} stroke={BS} /><path d="M.8 2v20.300H23" stroke={GS} strokeWidth="1.500" /></V>,
  <V><R t="b" a={[4.5, 3, 5.5, 14]} /><R t="w" a={[4.5, 17, 5.5, 5]} /><R t="g" a={[15, 3, 5, 8]} /><R t="w" a={[15, 11, 5, 11]} /><path d="m1 18 8-5 7 5 7-9" stroke={K} strokeWidth="1.400" /><Ax /></V>,
  <V><R t="b" a={[4.5, 11, 5.5, 11]} /><R t="w" a={[9.5, 1.5, 5.5, 20.5]} /><R t="g" a={[15, 7, 5, 15]} /><path d="m1 18 8-6 7 5 7-8" stroke={K} strokeWidth="1.400" /><Ax /></V>,

  <V><path d="M2 3q5 6 10 4 5-5 10-4v6q-5-1-9 3-6 2-11-2z" fill={GRAY} stroke={GS} /><path d="M2 14q5 0 10 2t10-2v6H2z" fill="#f5a742" stroke="#d9730d" /><path d="M2 9q3 1 5 5 5 3 9-1l6-3v4l-5 4q-5 3-10 0-2-3-5-4z" fill={BLUE} stroke={BS} /><Ax /></V>,
  <V><R t="w" a={[3.5, 7, 3.5, 15]} /><R t="w" a={[7, 7, 4, 15]} /><R t="g" a={[10, 2, 4.5, 12]} /><R t="b" a={[13.5, 2, 3.5, 11]} /><R t="w" a={[17.5, 2, 4.5, 20]} /><Ax /></V>,
  <V><R t="b" a={[0.8, 2, 22, 6.5]} /><R t="b" a={[4, 8.5, 15.5, 6.5]} /><R t="b" a={[7.5, 15, 8.5, 6.5]} /></V>,
  <V><g stroke="none"><rect x="16" y="1.500" width="4.500" height="4.500" fill={K} /><rect x="4" y="15" width="4.500" height="4.500" fill={K} /></g><R t="b" a={[4.5, 6, 3, 3]} /><R t="b" a={[10.5, 10, 3, 3]} /><R t="b" a={[17, 15, 3, 3]} /><Ax /></V>,
  <V><circle cx="11.800" cy="12" r="10.700" fill="#fff" stroke={K} strokeWidth="1.500" /><P t="b" d="M10.500 1.300A10.700 10.700 0 0 1 19 20l-8.500-7z" /></V>,
  <V><circle cx="11.800" cy="12" r="8" stroke={BS} strokeWidth="7" /><circle cx="11.800" cy="12" r="8" stroke={BLUE} strokeWidth="4.700" /><path d="M11.800.7A11.300 11.300 0 0 0 .5 12h6.500q0-5 4.800-5z" fill="#fff" stroke={GS} strokeWidth="1.200" /></V>,

  <V><R t="w" a={[0.8, 1, 22, 21.5]} /><R t="b" a={[0.8, 1, 10.2, 11]} /><R t="b" a={[0.8, 12, 10.2, 10.5]} /><path d="M11 7h12M11 7v15M16.500 8v14M16.500 14.500H23" stroke={K} /></V>,
  <V><circle cx="12.500" cy="10" r="7.500" fill="#fff" stroke={K} strokeWidth="1.300" /><path d="M8 6l5-2 1 4-4 2-2 4-2-5zM15 8l4 1-1 5-4 1z" fill="#3fa058" /><path d="M7 1Q-1 9 6 17q6 5 13 0M12 19v3M4.500 22.300H20" stroke={K} strokeWidth="1.500" /></V>,
  <V><P t="g" d="M1 2h5l6 2 5-2h5.500v8l-2 5-5 4-4 2-6-4-4-6z" /><P t="b" d="M1 2h8l1 8-4 2-5-1zM11 13l11-2-1 5-5 3-3 3-3-3z" /><P t="w" d="M2 12h7l2 6-4-1z" /></V>,
  <V><path d="M14-1 20 23l-6-5L1 17z" fill="#3fa0cf" /><path d="M14-1 21 25l-8-8z" fill="#1073b8" /><path d="m1 17 13-18-1 13z" fill="#5fb8dc" /></V>,
  <V><path d="M1 17A11 11 0 0 1 23 17h-6a5 5 0 0 0-10 0z" fill="#fff" stroke={K} strokeWidth="1.400" /><P t="b" d="M9 7q10-4 14 10h-5l-3-4-6 0z" /><path d="m11 17 7-7" stroke={K} strokeWidth="2.500" /></V>,
  <V><rect x=".8" y="3.500" width="22" height="17" fill="#fff" stroke={GS} strokeWidth="1.500" /><VisText x="3" y="15" $s={11}>123</VisText><path d="M3.500 17.500H20" stroke={GS} /></V>,

  <V><rect x=".8" y="1.500" width="22" height="21" fill="#fff" stroke={K} strokeWidth="1.500" /><path d="M4.500 4v16M7 10h6M7 19h6" stroke={GS} /><path d="M7 6h12.500M7 14.500h12.500" stroke="#1267b4" strokeWidth="2.500" /></V>,
  <V><rect x=".8" y="2.500" width="22" height="17.500" fill="#fff" stroke={K} strokeWidth="1.500" /><path d="m3 13 4-7 4 7z" fill="#3fa058" /><path d="m12 6 4 7 4-7z" fill="#e0403c" /><path d="M3.500 16.500H20" stroke={GS} /></V>,
  <V><path d="M9 21.500H.8V1.500h22V9" fill="none" stroke={K} strokeWidth="1.400" /><path d="M1 3.500h22" stroke={GS} strokeWidth="3" /><R t="g" a={[4.5, 9, 3.5, 3.5]} /><R t="g" a={[4.5, 15.5, 3.5, 3.5]} /><Funnel /></V>,
  <V><rect x=".8" y="1.500" width="22" height="21" fill="#fff" stroke={K} strokeWidth="1.400" /><path d="M1.500 3.500h20.500" stroke={GRAY} strokeWidth="2.500" /><path d="M1 5.500h22" stroke={K} /><GridLines /></V>,
  <V><rect x=".8" y="1.500" width="22" height="21" fill="#fff" stroke={K} strokeWidth="1.400" /><path d="M15 5.500h7.500v16.500H1.500V16H15z" fill={BLUE} /><path d="M1.500 3.500h20.500" stroke={GRAY} strokeWidth="2.500" /><path d="M1 5.500h22" stroke={K} /><GridLines /><path d="M15.500 5.500V16H1" stroke={BS} /></V>,
  <V><VisText x="4" y="19" $s={20} $w={700}>R</VisText></V>,

  <V><VisText x="0" y="18" $s={19} $w={600}>Py</VisText></V>,
  <V><path d="M1 5h15" stroke={BS} strokeWidth="1.500" /><path d="M1 11h11M1 16h6" stroke={GS} /><circle cx="18.500" cy="4.500" r="3" fill={BLUE} stroke={BS} /><circle cx="13.500" cy="11" r="1.500" stroke={GS} /><circle cx="8" cy="16.500" r="1.500" stroke={GS} /><Ax /></V>,
  <V><path d="M8 11.500h6M11 4v16M11 4h4M11 20h4" stroke={K} strokeWidth="1.400" /><R t="b" a={[0.8, 9, 8, 5]} /><R t="b" a={[14, 1.5, 8.5, 5]} /><R t="b" a={[14, 9, 8.5, 5]} /><R t="b" a={[14, 16.5, 8.5, 5]} /></V>,
  <V><path d="M.8 2.500h22v13.500H10l-5 5.500V16H.8z" fill="#fff" stroke={BS} strokeWidth="1.500" /></V>,
  <V><path d="M3.500 1h10l6.500 6.500v14.500H3.500z" fill="#fff" stroke={K} strokeWidth="1.400" /><path d="M13.500 1v6.500H20" stroke={K} /><path d="M9 11h8M6 15h9" stroke="#1f86c8" strokeWidth="1.400" /><circle cx="4" cy="9.500" r="2" fill={BLUE} stroke={BS} /></V>,
  <V><path d="M6 1h11.500v9q-2 5-5.700 5T6 10z" fill="#fff" stroke={K} strokeWidth="1.500" /><path d="M6 3H1v3q1 5 6 6M17.500 3h5v3q-1 5-6 6M11.800 15v4" stroke={K} strokeWidth="1.500" /><R t="b" a={[6.5, 18.5, 11, 3.5]} /></V>,

  <V><path d="M2.500 0h11l6.500 6.500V24H2.500z" fill="#fff" stroke={K} strokeWidth="1.500" /><path d="M13.500 0v6.500H20" stroke={K} /><path d="M7 21.500V13M11.500 21.500V17M16 21.500v-11" stroke={K} strokeWidth="3" /></V>,
  <V><path d="M12 4h10.800v17H.8v-5" fill="#fff" stroke={K} strokeWidth="1.500" /><rect x="1.500" y="8" width="11" height="12" fill="#fff" /><VisText x="4" y="15.500" $s={11}>123</VisText><path d="M3.500 18H20" stroke={GS} /><g transform="translate(-1 0)"><Bolt s={0.6} /></g></V>,
  <V><path d="M1 14v7.500h9M10 1.500h12.800V10" stroke={K} strokeWidth="1.400" /><path d="M10 3.500h13" stroke={GS} strokeWidth="3" /><R t="g" a={[5, 15.5, 3.5, 3.5]} /><Funnel /><g transform="translate(-1 0)"><Bolt s={0.6} /></g></V>,
  <V><circle cx="11.500" cy="12" r="8.500" fill="#1673c4" /><path d="M5 7l5-3 3 3-3 4-5 1zM14 14l5-4-1 7-4 3z" fill="#35a853" /><circle cx="11.500" cy="12" r="11" stroke="#a19f9d" /><path d="M11.500 1v22M.5 12h22M3 6h17M3 18h17M11.500 1q-11 11 0 22M11.500 1q11 11 0 22" stroke="#bfc9cf" /></V>,
  <V><g fill="#fff" stroke="#953a9c" strokeWidth="1.400" strokeLinejoin="round"><path d="M8.500 1.500h6.500q1 0 7.800 10-6.800 10.500-7.800 10.500H8.500Q7 22 .8 11.500 7 1.500 8.500 1.500z" /><path d="m11.800 1.800 5.200 5.200-5 4.800-5.200-4.800zM11.800 11.800l5.200 4.900-5.200 5-5.200-5z" /><path d="m6.600 7-5.300 4.800 5.300 4.900M17 7l5 4.800-5 4.900" /></g></V>,
  <V><g fill="#fff" stroke="#1a7bd4" strokeWidth="1.500" strokeLinejoin="round"><path d="M1 2h14.500l7.300 9.500-7.300 10H1l7-10z" /><path d="M3.500 18 15 3.500M9.500 21 19.500 7.500" strokeWidth="1.300" /></g></V>,
];

/* ---------- chart ---------- */
const AxisText = styled.text<{ $title?: boolean }>`
  font-family: ${UI};
  font-size: ${p => (p.$title ? 13.5 : 11.5)}px;
  letter-spacing: ${p => (p.$title ? 0.45 : -0.2)}px;
  fill: ${p => (p.$title ? '#252423' : '#605e5c')};
  text-anchor: middle;
`;
const answers = [{ k: '4', v: 6 }, { k: '3', v: 12 }, { k: '2', v: 42 }, { k: '1', v: 57 }];
const STEP = 13.035;
const Chart = () => (
  <svg width="880" height="500" viewBox="0 0 880 500">
    {[0, 10, 20, 30, 40, 50, 60].map(t => (
      <g key={t}>
        <path d={`M${56 + t * STEP} 27V429`} stroke="#c8c6c4" strokeDasharray="1.500 4.600" />
        <AxisText x={56 + t * STEP} y="445">{t}</AxisText>
      </g>
    ))}
    {answers.map((a, i) => (
      <g key={a.k}>
        <path d={`M56 ${68.2 + i * 106.2}H839`} stroke="#c8c6c4" strokeDasharray="1.500 4.600" />
        <rect x="56" y={25.7 + i * 106.2} width={a.v * STEP} height="85" fill="#118dff" />
        <AxisText x="42.500" y={72.5 + i * 106.2}>{a.k}</AxisText>
      </g>
    ))}
    <AxisText $title x="447" y="464.500">Frecuencia</AxisText>
    <AxisText $title transform="translate(30 227) rotate(-90)">Respuestas</AxisText>
  </svg>
);

const TableIcon = () => (
  <Glyph width="16" height="16" $mr={6} stroke={DK} strokeWidth="1.400"><rect x=".8" y=".8" width="14.400" height="14.400" rx="2.500" /><path d="M.8 5h14.400M.8 10.800h14.400M5 .8v14.400M10.800.8v14.400" /></Glyph>
);
const tables = ['Ajuste2', 'Coord. Hitos', 'DB', 'DBEvaluacionDocente', 'Diseño4', 'EVAUTOEVALUACION2022', 'EVAUTOEVALUACION2023', 'EVESTUDIANTES2022', 'EVESTUDIANTES2023', 'EVPARES2022', 'EVPARES2023', 'EVSUPERIORES2022', 'EVSUPERIORES2023', 'Hitos1'];
const fields: [string, boolean][] = [['Facultad', false], ['Frecuencia', true], ['Porcentaje', false], ['Porcentaje Acumulado', true], ['Porcentaje Válido', true], ['Pregunta', false], ['Respuestas', true]];
const TableEntry = ({ name, open }: { name: string; open?: boolean }) => (
  <TableRow>
    <Glyph width="16" height="14" viewBox="0 0 16 14" $ml={16} $mr={4} stroke="#484644" strokeWidth="1.200">{open ? <path d="m1 3 7 7 7-7" /> : <path d="m4 0 7.500 7L4 14" />}</Glyph>
    <TableIcon />{name}
  </TableRow>
);

const questions = [
  '¿ La UnACh promueve mecanismos para estimular la\ncreatividad y el pensamiento crítico entre los estudiantes?',
  '¿Consideras que en la UnACh se fomenta la innovación en\nlos métodos de enseñanza y aprendizaje?',
  '¿Consideras que la UnACh promueve el uso de nuevas\ntecnologías para mejorar la calidad educativa?',
  '¿Percibes con facilidad que el proyecto educativo de la\nUnACh se fundamente en una cosmovisión bíblico\ncristiana?',
];

const TogglePill = () => (
  <Toggle><Glyph width="40" height="20"><path d="m8 10 4 4 6.500-7" stroke="#fff" strokeWidth="2.800" /><circle cx="29" cy="10" r="5" fill="#fff" /></Glyph></Toggle>
);
const RailG = ({ children }: { children: React.ReactNode }) => <svg width="24" height="24" fill="none" stroke="#7a7876" strokeWidth="1.400">{children}</svg>;
const DaxText = styled.text`
  font-family: ${UI};
  font-size: 8.5px;
  font-weight: 700;
  letter-spacing: 0;
  fill: #7a7876;
  stroke: none;
`;
const OfficeTile = ({ letter, c }: { letter: string; c: string[] }) => (
  <svg width="30" height="30">
    <rect x="6" y="1" width="23" height="28" rx="2" fill={c[0]} /><path d="M6 8h23v7H6z" fill={c[1]} /><path d="M6 15h23v7H6z" fill={c[2]} /><path d="M6 22h23v5q0 2-2 2H8q-2 0-2-2z" fill={c[3]} />
    <rect x="0" y="7.500" width="16" height="16" rx="1.500" fill={c[4]} />
    <TileLetter x="8" y="20">{letter}</TileLetter>
  </svg>
);

export default function App() {
  return (
    <Screen>
      <Global />
      <TitleBar>
        <QuickAccess>
          <Glyph width="18" height="19" stroke="#fff" strokeWidth="1.300"><path d="M.8.8h16.500v17.400H3.500L.8 15.500zM4 1v7.500h10.500V1M5.500 18v-5.500h7V18" /></Glyph>
          <Glyph width="17" height="19" stroke="#fff" strokeWidth="1.400"><path d="M1 1v7h7M1.500 7.500Q6 1 11 1.500q5 1 5 6 0 2-2 4.500L7 18.500" /></Glyph>
          <Glyph width="17" height="19" $ml={1} stroke="#7d7b79" strokeWidth="1.400"><path d="M16 1v7H9M15.500 7.500Q11 1 6 1.500q-5 1-5 6 0 2 2 4.500l7 6.500" /></Glyph>
        </QuickAccess>
        <DocTitle>Docencia</DocTitle>
        <WindowTools>
          <UserName>Felipe Pereira</UserName>
          <Avatar><svg width="25" height="25"><circle cx="12.500" cy="12.500" r="12.500" fill="#f3f2f1" /><circle cx="12.500" cy="7.500" r="3.800" fill="none" stroke="#201f1e" strokeWidth="1.600" /><path d="M5.500 13.500h14v2q0 5-7 5.500-7-.5-7-5.500z" fill="none" stroke="#201f1e" strokeWidth="1.600" /></svg></Avatar>
          <WindowButtons>
            <Glyph width="13" height="14" stroke="#fff" strokeWidth="1.300"><path d="M0 7h13" /></Glyph>
            <Glyph width="13" height="14" stroke="#fff" strokeWidth="1.200"><rect x=".7" y="3.500" width="9.500" height="9.500" rx="1.500" /><path d="M3 1.200h7q2.300 0 2.300 2.300v7" /></Glyph>
            <Glyph width="14" height="14" stroke="#fff" strokeWidth="1.300"><path d="m.8.800 12.400 12.400M13.200.8.800 13.200" /></Glyph>
          </WindowButtons>
        </WindowTools>
      </TitleBar>

      <Ribbon>
        <MenuRow>
          <MenuItem $w={105}><span>Archivo</span></MenuItem>
          <MenuItem $w={82} $active><span>Inicio</span></MenuItem>
          <MenuItem $w={98}><span>Insertar</span></MenuItem>
          <MenuItem $w={118}><span>Modelado</span></MenuItem>
          <MenuItem $w={64}><span>Ver</span></MenuItem>
          <MenuItem $w={116}><span>Optimizar</span></MenuItem>
          <MenuItem $w={60}><span>Ayuda</span></MenuItem>
          <ShareButton>
            <Glyph width="20" height="19" stroke="#fff" strokeWidth="1.500"><path d="M4 5H1v13h13v-4" /><path d="M5 13q1-8 8-8V1l6 6-6 6V9q-5 0-8 4z" /></Glyph>
            Compartir
            <svg width="13" height="8" fill="none" stroke="#fff" strokeWidth="1.600"><path d="m1 1 5.500 5.500L12 1" /></svg>
          </ShareButton>
        </MenuRow>
        <Groups>
          <Group $w={204} $pad={12}>
            <GroupButtons>
              <ToolButton $w={46}>{big.paste}<ToolLabel>Pegar</ToolLabel></ToolButton>
              <ClipList>
                <ClipItem><Glyph width="18" height="22" stroke="#b8b6b4" strokeWidth="1.400"><path d="M5 1l6 13M13 1 7 14" /><circle cx="5" cy="17" r="2.800" stroke="#a9cfe8" /><circle cx="13" cy="17" r="2.800" stroke="#a9cfe8" /></Glyph>Cortar</ClipItem>
                <ClipItem><Glyph width="18" height="20" $ml={-2} $mr={2} stroke="#b3b1af" strokeWidth="1.300"><path d="M8 18H.8V.8H11V4" /><path d="M7 5h7l5 5v9.500H7zM14 5v5h5M9.500 13h7M9.500 16h7" /></Glyph>Copia</ClipItem>
                <ClipItem><Glyph width="18" height="20" $ml={-2} $mr={2} stroke="#b3b1af" strokeWidth="1.400"><path d="M1 10 9 5l7 7-6 8z" fill="#fbe9dc" stroke="#eec09a" /><path d="m8 5 8 8 1.500-4L15 6.500l5-4L18 .5l-5 4-2-1z" fill="#fafafa" /></Glyph>Copiar formato</ClipItem>
              </ClipList>
            </GroupButtons>
            <GroupName $pull={12}>Portapapeles</GroupName>
          </Group>
          {groups.map(g => (
            <Group key={g.name} $w={g.w} $pad={g.pad}>
              <GroupButtons>{g.tools.map(t => <ToolView key={t.i} t={t} />)}</GroupButtons>
              <GroupName $pull={g.pad}>{g.name}</GroupName>
            </Group>
          ))}
          <Collapse><Glyph width="10" height="7" stroke={DK} strokeWidth="1.800"><path d="m1 6 4-4.500L9 6" /></Glyph></Collapse>
        </Groups>
      </Ribbon>

      <Work>
        <Rail>
          <RailItem $active><Glyph width="24" height="24" stroke={DK} strokeWidth="1.400"><path d="M3.500 3.500v17H21" /><rect x="7" y="8" width="3" height="10" /><rect x="11.500" y="10.500" width="3" height="7.500" /><rect x="16" y="5" width="3.500" height="13" fill="#a19f9d" /></Glyph></RailItem>
          <RailItem><RailG><rect x="3" y="2.500" width="19" height="17.500" /><path d="M3 6.500h19M3 11h19M3 15.500h19M9 6v14M15.500 6v14" /></RailG></RailItem>
          <RailItem><RailG><rect x="1.500" y="8" width="9" height="8.500" /><rect x="14" y="1.500" width="9" height="8.500" /><rect x="14" y="14" width="9" height="8.500" /><path d="M1.500 11h9M14 4.500h9M14 17h9M6.500 8V3.500H14M6.500 16.500v3.500H14" /></RailG></RailItem>
          <RailItem><RailG><path d="M5.500 13V3q0-1.500 1.500-1.500h6l5 5V20M12.500 2v5H18M20.500 9v7q0 4-3.500 4" /><rect x="0" y="13.500" width="16" height="8" fill="#f3f2f1" stroke="none" /><DaxText x="0" y="21">DAX</DaxText></RailG></RailItem>
        </Rail>

        <Center>
          <CanvasRow>
            <Canvas>
              <DotRule />
              <PageHeader>
                <BackButton><Glyph width="32" height="32" stroke="#fff" strokeWidth="2.400"><circle cx="15.500" cy="15.500" r="14" /><path d="M25 15.500H7M14.500 7 6.500 15.500l8 8.500" strokeWidth="3" /></Glyph></BackButton>
                <PageTitle>Modelo Educativo <OldStyle>202</OldStyle><OldStyleDrop>4</OldStyleDrop></PageTitle>
                <Logo>
                  <svg width="35" height="34" viewBox="0 0 35 34"><path d="M12 1h10l12.500 31h-8.500l-3.500-10-11 4-2.500 6H.5z" fill="#fff" /><path d="m17 8 3 8-6 1z" fill={NAVY} /><path d="M1 24q10-4 17-6 10-2 13-9 1 7-6 11-6 2-12 3L1 29z" fill="#fff" /><path d="M0 22.500q9-3.500 17-5.500 10-2 13-8M1 26.500q9-3 17-4.500 11-2 13.500-9M3 30q8-4 16-5 10-2 12-8" fill="none" stroke={NAVY} strokeWidth="1.200" /></svg>
                  <LogoText><LogoName>UNACH</LogoName><LogoSub>UNIVERSIDAD ADVENTISTA</LogoSub><LogoSub>DE CHILE</LogoSub></LogoText>
                </Logo>
              </PageHeader>
              <PageBody>
                <Slicers>
                  <QuestionRow>
                    <Questions>{questions.map((q, i) => <Question key={q} $on={i === 0}>{q}</Question>)}</Questions>
                    <SlicerThumb />
                  </QuestionRow>
                  <Faculties>{['FACIS', 'FACS', 'FAIN', 'FEDUC', 'FTEO'].map((f, i) => <Faculty key={f} $on={i === 0}>{f}</Faculty>)}</Faculties>
                  <ClearButton>Borrar Filtros</ClearButton>
                </Slicers>
                <ChartColumn>
                  <ChartTitle>Frecuencia de las respuestas por facultad</ChartTitle>
                  <ChartCard><Chart /></ChartCard>
                </ChartColumn>
                <NextArrow><Glyph width="45" height="44" stroke={NAVY} strokeWidth="2.800"><path d="M0 22h42M22 1.500 42.500 22 22 42.500" /></Glyph></NextArrow>
              </PageBody>
              <DotRule />
            </Canvas>
            <FiltersPane>
              <DoubleChevron left s={16} />
              <Glyph width="15" height="16" $mt={19} $ml={5} stroke={DK} strokeWidth="1.300"><path d="M13.800.8v14L7 10H1V6h6z" /></Glyph>
              <FiltersLabel>Filtros</FiltersLabel>
            </FiltersPane>
          </CanvasRow>
          <TabStrip>
            <ViewModes>
              <ModeButton $active><Glyph width="24" height="19" $mt={3} stroke="#605e5c" strokeWidth="1.500"><rect x=".8" y=".8" width="22.400" height="13" /><path d="M10 14v3.500M14 14v3.500M7.500 17.500h9" /></Glyph></ModeButton>
              <ModeButton><Glyph width="16" height="25" stroke="#605e5c" strokeWidth="1.600"><rect x=".8" y=".8" width="14.400" height="23.500" rx="1.500" /><path d="M6.500 21h3" /></Glyph></ModeButton>
              <Nudge><svg width="6" height="10"><path d="M6 0v10L0 5z" fill="#111" /></svg><svg width="6" height="10"><path d="M0 0v10l6-5z" fill="#c8c6c4" /></svg></Nudge>
            </ViewModes>
            <TabGap />
            <PageTab $w={267}>DOCENTES INSCRITOS A CURSO</PageTab>
            <PageTab $w={208}>EVALUACIÓN DOCENTE</PageTab>
            <PageTab $w={286}>DESCARGA EVALUACION DOCENTE</PageTab>
            <PageTab $w={150}>COORD. HITOS</PageTab>
            <PageTab $w={213} $active>Modelo Educativo 2024</PageTab>
            <AddPage><svg width="14" height="14" stroke="#fff" strokeWidth="4"><path d="M0 7h14M7 0v14" /></svg></AddPage>
          </TabStrip>
        </Center>

        <VisPane>
          <PaneHead>Visualizaciones<DoubleChevron /></PaneHead>
          <BuildLabel>Compilar visual</BuildLabel>
          <BuildTabs>
            <BuildTab $on><svg width="30" height="30"><path d="M0 .7h24" stroke={DK} strokeWidth="1.300" /><rect x="1" y="7" width="28" height="9" fill={GREEN} stroke={DK} strokeWidth="1.300" strokeDasharray="2.500 1.500" /><rect x="1" y="20.500" width="28" height="9" fill={GREEN} stroke={DK} strokeWidth="1.300" strokeDasharray="2.500 1.500" /></svg></BuildTab>
            <BuildTab><Glyph width="30" height="30" stroke={DK} strokeWidth="1.500"><path d="M5 29.500H.8V.8h12.700L22 9.500v2M13.500.8v8.700H22" /><path d="M29.500 11.500 18 26q-3 4-9.500 3 3-1 3-4 1-3 4-2.500z" fill="#fff" /><path d="m15.500 22 3 3" /></Glyph></BuildTab>
          </BuildTabs>
          <Glyph width="225" height="16" stroke="#8a8886" strokeWidth="1.200"><path d="M0 15.500h20.500l9.500-9 9.500 9H225" /></Glyph>
          <VisGrid>{visuals.map((v, i) => <React.Fragment key={i}>{v}</React.Fragment>)}</VisGrid>
          <More><Dot /><Dot /><Dot /></More>
          <FieldWells>
            <WellTitle>Valores</WellTitle>
            <Well $h={35} $x={12} $mt={6}>Agregar campos de datos a...</Well>
            <WellTitle $bold>Obtener detalles</WellTitle>
            <ToggleRow $mt={10}><span>Entre varios informes</span><TogglePill /></ToggleRow>
            <ToggleRow $mt={14}><span>Mantener todos los<br />filtros</span><TogglePill /></ToggleRow>
            <Well $h={32} $x={10} $mt={13}>Agregue los campos de ob...</Well>
          </FieldWells>
        </VisPane>

        <DataPane>
          <PaneHead>Datos<DoubleChevron /></PaneHead>
          <SearchBox><Glyph width="19" height="19" $mt={-2} stroke="#605e5c" strokeWidth="1.300"><circle cx="12.500" cy="6.500" r="5.800" /><path d="M8.300 10.700 1 18" /></Glyph>Buscar</SearchBox>
          <TreeRow>
            <Tree>
              {tables.map(t => <TableEntry key={t} name={t} />)}
              <TableEntry name="PreguntasCoord" open />
              {fields.map(([f, agg]) => (
                <FieldRow key={f}><Check /><Agg>{agg && <Glyph width="13" height="15" stroke={DK} strokeWidth="1.400"><path d="M13 .8H1L8 7.500l-7 6.700h12" /></Glyph>}</Agg>{f}</FieldRow>
              ))}
              <TableEntry name="Tabla 1 (Hoja1)" />
            </Tree>
            <TreeThumb />
          </TreeRow>
        </DataPane>
      </Work>

      <StatusBar>
        <PageCount>Página 8 de 8</PageCount>
        <Zoom>
          <Glyph width="145" height="16" $mt={-3} stroke="#605e5c"><path d="M0 8h6" strokeWidth="2" /><path d="M12 8.500h125M74.500 5v7" strokeWidth="1.200" /><rect x="59" y="2" width="4.500" height="13" fill="#605e5c" stroke="none" /></Glyph>
          <Glyph width="10" height="10" $ml={-1} $mt={-3} stroke="#605e5c" strokeWidth="1.800"><path d="M0 5h10M5 0v10" /></Glyph>
          <ZoomPct>81 %</ZoomPct>
          <Glyph width="20" height="16" stroke="#605e5c" strokeWidth="1.600"><rect x=".8" y=".8" width="18.400" height="14.400" /><path d="M6 3.500H3.500V6M14 3.500h2.500V6M6 12.500H3.500V10M14 12.500h2.500V10" strokeWidth="1.200" /></Glyph>
        </Zoom>
        <Update>Actualización disponible (clic para descargarla)</Update>
      </StatusBar>

      <Taskbar>
        <Apps>
          <AppTile><svg width="30" height="30"><defs><linearGradient id="win" x2="1" y2="1"><stop stopColor="#4fd0fb" /><stop offset="1" stopColor="#0067c8" /></linearGradient></defs><path d="M0 2q0-1.500 1.500-1.500h13v14H0zM15.500.5h12.500q1.500 0 1.500 1.500v12.500h-14zM0 15.500h14.500v14h-13Q0 29.500 0 28zM15.500 15.500h14v12.500q0 1.500-1.500 1.500H15.500z" fill="url(#win)" /></svg><RunDot $none /></AppTile>
          <AppTile><svg width="30" height="30" viewBox="0 0 30 30"><path d="M15 15 2 7.500A15 15 0 0 1 28 7.500z" fill="#ea4335" /><path d="M15 15 2 7.500A15 15 0 0 0 15 30l6.500-11z" fill="#34a853" /><path d="M15 7.500h13A15 15 0 0 1 15 30l6.500-11z" fill="#fbbc05" /><circle cx="15" cy="15" r="7.500" fill="#fff" /><circle cx="15" cy="15" r="5.800" fill="#2f7bea" /></svg><RunDot /></AppTile>
          <AppTile><svg width="30" height="30"><path d="M0 4q0-2 2-2h7l3 3h16q2 0 2 2v5H0z" fill="#e0a112" /><path d="M0 10q0-1 2-1h8l2-3h16q2 0 2 2v19q0 2-2 2H2q-2 0-2-2z" fill="#fcc936" /><path d="M5 29v-6q0-2 2-2h16q2 0 2 2v6z" fill="#1784d8" /><path d="M8.500 25h13" stroke="#0b5aa0" strokeWidth="1.600" /></svg><RunDot /></AppTile>
          <AppTile><Glyph width="30" height="30"><circle cx="15" cy="15" r="14.500" fill="#1ed760" /><g stroke="#10240f" strokeLinecap="round"><path d="M6 10.500q10-3 19 2" strokeWidth="3" /><path d="M7 15.500q9-2.500 16 1.500" strokeWidth="2.500" /><path d="M7.500 20q8-2 13.500 1.500" strokeWidth="2" /></g></Glyph><RunDot /></AppTile>
          <AppTile $active><svg width="30" height="30"><path d="M15 1.500q0-1.500 1.500-1.500H25q1.500 0 1.500 1.500V30H15z" fill="#c98a10" /><path d="M15 1.500q0-1.500 1.500-1.500H25q1.500 0 1.500 1.500v10L15 8z" fill="#e5ac1a" /><path d="M9.500 9q0-1.500 1.500-1.500h8.500Q21 7.500 21 9v21H9.500z" fill="#ecbf2e" /><path d="M4 17q0-1.500 1.500-1.500H13q1.500 0 1.500 1.500v13h-9Q4 30 4 28.500z" fill="#f7dc6a" /></svg><RunDot $active /></AppTile>
          <AppTile><OfficeTile letter="W" c={['#41a5ee', '#2b7cd3', '#185abd', '#103f91', '#1c56b8']} /><RunDot /></AppTile>
          <AppTile><Glyph width="30" height="30"><path d="M1 29 3 21.500A13 13 0 1 1 8.500 27z" stroke="#1c9453" strokeWidth="2.800" /><path d="M10 8.500q1.500-1 2.500 0l1.500 3.500-1.500 2q1.500 3 4.500 4.500l2-2 3.500 1.800q.5 2-1 3.200-3 2-8-1.500-5-4-5.500-8 0-2.500 2-3.500z" fill="#1c9453" /></Glyph><Badge>49</Badge><RunDot /></AppTile>
          <AppTile><OfficeTile letter="X" c={['#33c481', '#21a366', '#107c41', '#185c37', '#107c41']} /><RunDot /></AppTile>
        </Apps>
        <Tray>
          <Glyph width="14" height="9" stroke="#1b1b1b" strokeWidth="1.700"><path d="m1 8 6-6 6 6" /></Glyph>
          <Glyph width="20" height="13" $ml={23}><path d="M4.500 13Q0 13 0 9t4-4.500Q6 0 10 0t5.500 4.500Q20 5 20 9t-4.500 4z" fill="#1490df" /><path d="M4 4.500Q6 0 10 0t5.500 4.500L9 8z" fill="#0a64b4" /><path d="m2 12.500 13-8Q20 5 20 9t-4.500 4h-11z" fill="#28a8ea" /></Glyph>
          <Lang>ESP<br />LAA</Lang>
          <Glyph width="20" height="16" stroke="#1b1b1b" strokeWidth="1.400"><path d="M.8 6.500q9.200-10 18.400 0M4 9.500q6-6.500 12 0M6.800 12q3.200-3.500 6.400 0" /><circle cx="10" cy="14" r="1.600" fill="#1b1b1b" stroke="none" /></Glyph>
          <Glyph width="20" height="16" $ml={11} stroke="#1b1b1b" strokeWidth="1.400"><path d="M1 5.500h3L9 1.500v13l-5-4H1zM11.500 5.500q1.500 2.500 0 5" /><path d="M14 3.500q3 4.500 0 9M16.500 1.500q5 6.500 0 13" stroke="#a9b2bc" /></Glyph>
          <Glyph width="21" height="18" $ml={9} $mr={1}><path d="M3.500 8v6q0 1.500 1.500 1.500h6M9 3.500h7q2 0 2 2V8" stroke="#1b1b1b" strokeWidth="1.500" /><path d="M5.500 13 8 5.500h7.500v3L11 13zM4 0 0 6h3L2 10l5-6H4.500z" fill="#1b1b1b" /><path d="m15.500 18-4.500-4.500q-1-3 2-3.500 1.500 0 2.500 1.500Q17 10 18.500 10q3 .5 2 3.500z" fill="#1b1b1b" /></Glyph>
          <Clock>12:27<br />07-06-2024</Clock>
          <svg width="16" height="20" fill="#003e92"><path d="M0 15.500 2 12V7q1-6.500 6-7 5 .5 6 7v5l2 3.500v1H0zM5 17.500h6Q10 20 8 20t-3-2.500z" /></svg>
        </Tray>
      </Taskbar>
    </Screen>
  );
}
